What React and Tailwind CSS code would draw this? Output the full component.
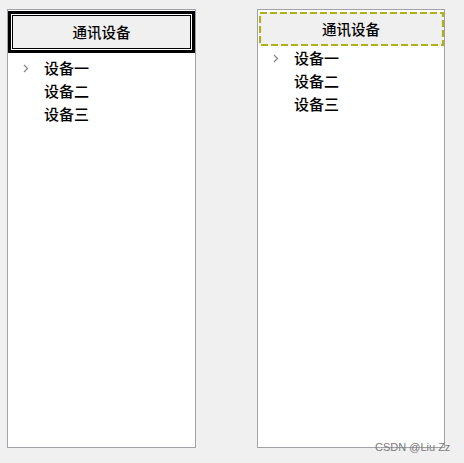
const items = ["设备一", "设备二", "设备三"];

const Chevron = () => (
  <svg width="6" height="9" viewBox="0 0 6 9" className="shrink-0">
    <path d="M1 1 L4.5 4.5 L1 8" fill="none" stroke="#8a8a8a" strokeWidth="1.3" />
  </svg>
);

const Tree = () => (
  <div className="flex flex-col">
    {items.map((label, i) => (
      <div key={label} className="flex h-[23px] items-center">
        <div className="flex w-[36px] justify-center">{i === 0 && <Chevron />}</div>
        <span className="text-[15px] font-medium text-black">{label}</span>
      </div>
    ))}
  </div>
);

export default function App() {
  return (
    <div
      className="relative flex h-[463px] w-[464px] gap-[61px] bg-[#f0f0f0] pl-[7px] pt-[9px]"
      style={{ fontFamily: '"Microsoft YaHei", "Noto Sans CJK SC", sans-serif' }}
    >
      <div className="h-[439px] w-[189px] border border-[#a0a2a8] bg-white">
        <div className="mt-px border-[3px] border-black bg-white p-px">
          <div className="flex h-[34px] items-center justify-center border border-black bg-[#f0f0f0] text-[14.5px] font-medium text-black">
            通讯设备
          </div>
        </div>
        <div className="pt-[4px]">
          <Tree />
        </div>
      </div>

      <div className="h-[439px] w-[188px] border border-[#a0a2a8] bg-white">
        <div className="relative mx-px mt-[2px] flex h-[34px] items-center justify-center bg-[#f0f0f0] text-[14.5px] font-medium text-black">
          <svg className="absolute inset-0" width="185" height="34">
            <rect x="1" y="1" width="183" height="32" fill="none" stroke="#b0b018" strokeWidth="2.2" strokeDasharray="7 3" />
          </svg>
          <span className="relative">通讯设备</span>
        </div>
        <div className="pt-px">
          <Tree />
        </div>
      </div>

      <div className="absolute left-[375px] top-[442px] text-[11px] leading-none text-[#7c7c7c]" style={{ fontFamily: '"Liberation Sans", sans-serif' }}>
        CSDN @Liu Zz
      </div>
    </div>
  );
}
